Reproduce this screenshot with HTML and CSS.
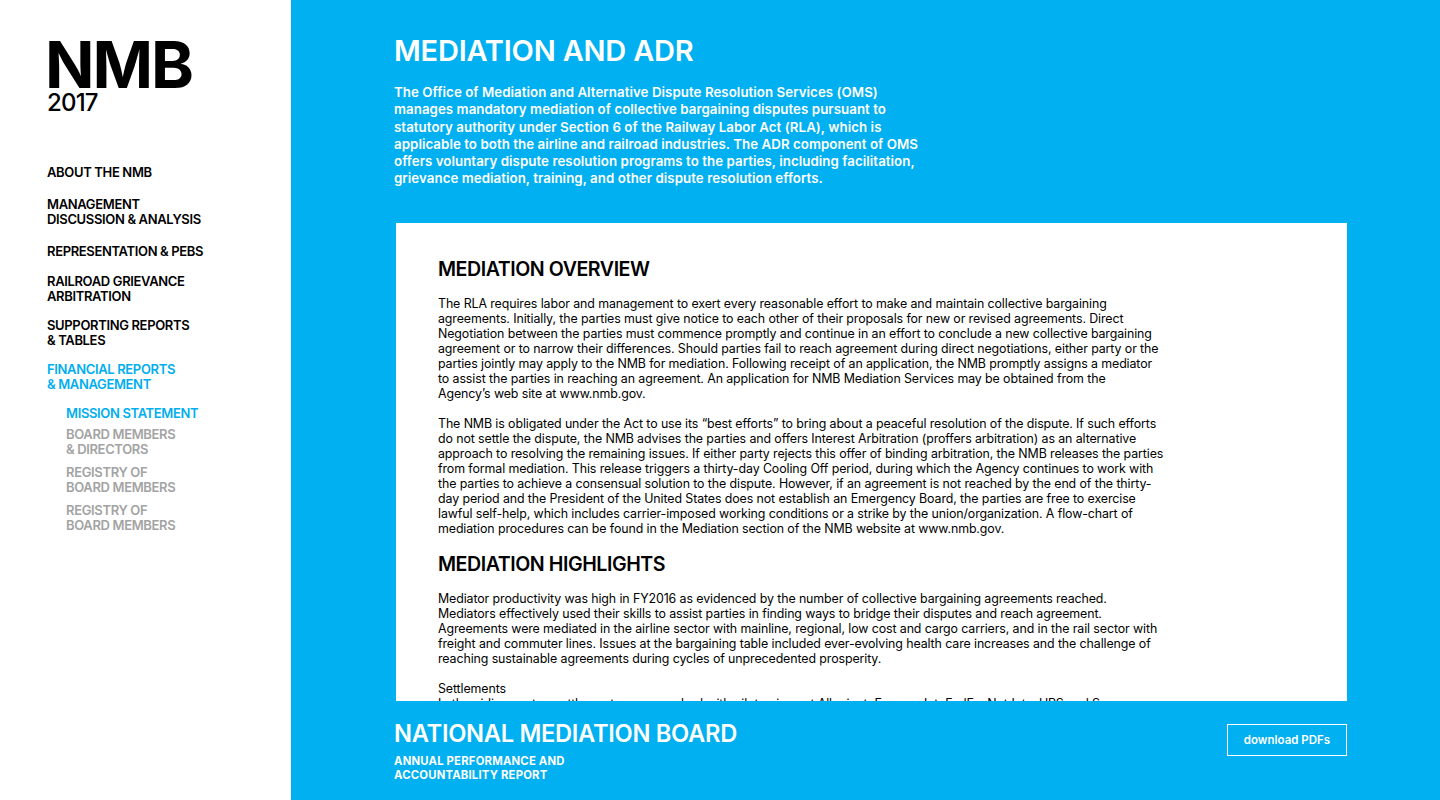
FILE: index.html
```html
<!DOCTYPE html>
<html lang="en">
<head>
<meta charset="utf-8">
<title>NMB 2017 – Mediation and ADR</title>
<link rel="stylesheet" href="styles.css">
</head>
<body>
<div class="page">
  <aside class="sidebar">
    <div class="logo">
      <div class="logo-name">NMB</div>
      <div class="logo-year">2017</div>
    </div>
    <nav class="nav">
      <a class="nav-item wide" href="#">ABOUT THE NMB</a>
      <a class="nav-item wide" href="#">MANAGEMENT<br>DISCUSSION &amp; ANALYSIS</a>
      <a class="nav-item mid" href="#">REPRESENTATION &amp; PEBS</a>
      <a class="nav-item" href="#">RAILROAD GRIEVANCE<br>ARBITRATION</a>
      <a class="nav-item" href="#">SUPPORTING REPORTS<br>&amp; TABLES</a>
      <a class="nav-item active" href="#">FINANCIAL REPORTS<br>&amp; MANAGEMENT</a>
      <div class="subnav">
        <a class="sub-item active" href="#">MISSION STATEMENT</a>
        <a class="sub-item" href="#">BOARD MEMBERS<br>&amp; DIRECTORS</a>
        <a class="sub-item" href="#">REGISTRY OF<br>BOARD MEMBERS</a>
        <a class="sub-item" href="#">REGISTRY OF<br>BOARD MEMBERS</a>
      </div>
    </nav>
  </aside>
  <main class="main">
    <header class="intro">
      <h1 class="title">MEDIATION AND ADR</h1>
      <p class="lead">The Office of Mediation and Alternative Dispute Resolution Services (OMS)<br>manages mandatory mediation of collective bargaining disputes pursuant to<br>statutory authority under Section 6 of the Railway Labor Act (RLA), which is<br>applicable to both the airline and railroad industries. The ADR component of OMS<br>offers voluntary dispute resolution programs to the parties, including facilitation,<br>grievance mediation, training, and other dispute resolution efforts.</p>
    </header>
    <section class="card">
      <h2 class="card-title">MEDIATION OVERVIEW</h2>
      <p class="text">The RLA requires labor and management to exert every reasonable effort to make and maintain collective bargaining<br>agreements. Initially, the parties must give notice to each other of their proposals for new or revised agreements. Direct<br>Negotiation between the parties must commence promptly and continue in an effort to conclude a new collective bargaining<br>agreement or to narrow their differences. Should parties fail to reach agreement during direct negotiations, either party or the<br>parties jointly may apply to the NMB for mediation. Following receipt of an application, the NMB promptly assigns a mediator<br>to assist the parties in reaching an agreement. An application for NMB Mediation Services may be obtained from the<br>Agency’s web site at www.nmb.gov.</p>
      <p class="text">The NMB is obligated under the Act to use its “best efforts” to bring about a peaceful resolution of the dispute. If such efforts<br>do not settle the dispute, the NMB advises the parties and offers Interest Arbitration (proffers arbitration) as an alternative<br>approach to resolving the remaining issues. If either party rejects this offer of binding arbitration, the NMB releases the parties<br>from formal mediation. This release triggers a thirty-day Cooling Off period, during which the Agency continues to work with<br>the parties to achieve a consensual solution to the dispute. However, if an agreement is not reached by the end of the thirty-<br>day period and the President of the United States does not establish an Emergency Board, the parties are free to exercise<br>lawful self-help, which includes carrier-imposed working conditions or a strike by the union/organization. A flow-chart of<br>mediation procedures can be found in the Mediation section of the NMB website at www.nmb.gov.</p>
      <h2 class="card-title">MEDIATION HIGHLIGHTS</h2>
      <p class="text">Mediator productivity was high in FY2016 as evidenced by the number of collective bargaining agreements reached.<br>Mediators effectively used their skills to assist parties in finding ways to bridge their disputes and reach agreement.<br>Agreements were mediated in the airline sector with mainline, regional, low cost and cargo carriers, and in the rail sector with<br>freight and commuter lines. Issues at the bargaining table included ever-evolving health care increases and the challenge of<br>reaching sustainable agreements during cycles of unprecedented prosperity.</p>
      <p class="text">Settlements<br>In the airline sector, settlements were reached with pilot unions at Allegiant, ExpressJet, FedEx, NetJets, UPS and Sun<br>Country, and with flight attendant unions at several regional carriers.</p>
    </section>
    <footer class="footer">
      <div class="footer-brand">
        <div class="footer-name">NATIONAL MEDIATION BOARD</div>
        <div class="footer-sub">ANNUAL PERFORMANCE AND<br>ACCOUNTABILITY REPORT</div>
      </div>
      <a class="download" href="#">download PDFs</a>
    </footer>
  </main>
</div>
</body>
</html>
```
FILE: styles.css
```css
* { box-sizing: border-box; }
html, body { margin: 0; padding: 0; height: 100%; }
body {
  font-family: "Inter", "Liberation Sans", sans-serif;
  color: #000;
  background: #fff;
  overflow: hidden;
}
a { text-decoration: none; color: inherit; }

.page {
  display: flex;
  width: 1440px;
  height: 800px;
}

/* Sidebar */
.sidebar {
  width: 291px;
  flex: none;
  padding: 40px 0 0 47px;
  background: #fff;
}
.logo-name {
  font-size: 65px;
  font-weight: 700;
  letter-spacing: -2px;
  line-height: 50px;
  margin-left: -2px;
}
.logo-year {
  font-size: 24px;
  font-weight: 500;
  letter-spacing: -0.8px;
  line-height: 24px;
  margin-top: 1px;
}
.nav {
  display: flex;
  flex-direction: column;
  margin-top: 50px;
}
.nav-item {
  font-size: 13px;
  font-weight: 600;
  letter-spacing: -0.35px;
  line-height: 15px;
  margin-bottom: 14px;
  color: #000;
}
.nav-item.wide { margin-bottom: 17px; }
.nav-item.mid { margin-bottom: 15px; }
.nav-item.active { color: #00aeef; }
.subnav {
  display: flex;
  flex-direction: column;
  padding-left: 19px;
}
.sub-item {
  font-size: 13px;
  font-weight: 600;
  letter-spacing: -0.35px;
  line-height: 15px;
  margin-bottom: 8px;
  color: #a3a3a3;
}
.sub-item.active { color: #00aeef; margin-bottom: 6px; }

/* Main */
.main {
  flex: 1;
  background: #00b0f0;
  padding: 0 93px 0 105px;
  display: flex;
  flex-direction: column;
  color: #fff;
}
.intro { padding-top: 34px; height: 223px; flex: none; }
.title {
  margin: 0 0 0 -2px;
  font-size: 29px;
  font-weight: 600;
  letter-spacing: -0.2px;
  line-height: 34px;
}
.lead {
  margin: 16px 0 0 -2px;
  font-size: 13.3px;
  font-weight: 600;
  line-height: 17.3px;
  letter-spacing: 0.05px;
  white-space: nowrap;
}

.card {
  background: #fff;
  color: #000;
  height: 478px;
  overflow: hidden;
  padding: 33px 40px 0 42px;
  flex: none;
}
.card-title {
  margin: 0 0 14px;
  font-size: 19.6px;
  font-weight: 600;
  letter-spacing: -0.45px;
  line-height: 26px;
}
.text {
  margin: 0 0 15px;
  font-size: 12.4px;
  line-height: 15px;
  letter-spacing: -0.1px;
  white-space: nowrap;
}

.footer {
  display: flex;
  justify-content: space-between;
  align-items: flex-start;
  padding-top: 19px;
}
.footer-brand { margin-left: -2px; }
.footer-name {
  font-size: 23.7px;
  font-weight: 600;
  letter-spacing: -0.3px;
  line-height: 27px;
}
.footer-sub {
  margin-top: 7px;
  font-size: 11.3px;
  font-weight: 700;
  line-height: 14px;
  letter-spacing: 0.2px;
}
.download {
  margin-top: 4px;
  width: 120px;
  height: 32px;
  border: 1px solid #fff;
  display: flex;
  align-items: center;
  justify-content: center;
  font-size: 11.5px;
  font-weight: 600;
  color: #fff;
}
```
